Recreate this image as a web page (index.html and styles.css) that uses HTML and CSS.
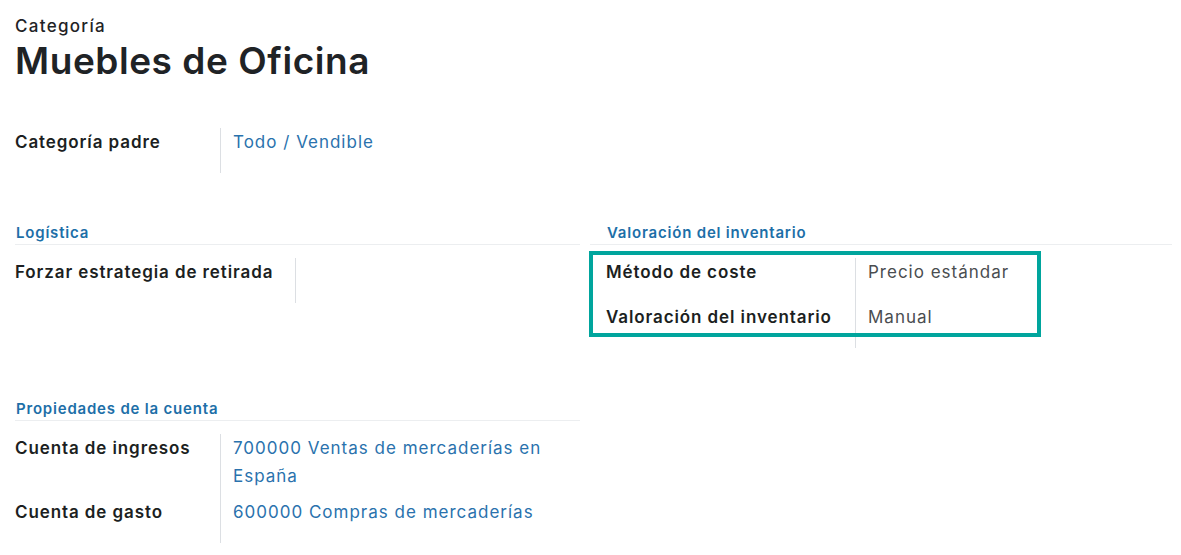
FILE: index.html
```html
<!DOCTYPE html>
<html lang="es">
<head>
<meta charset="utf-8">
<title>Categoría - Muebles de Oficina</title>
<link rel="stylesheet" href="styles.css">
</head>
<body>
<div class="sheet">
  <div class="title-block">
    <div class="cat-label">Categoría</div>
    <h1 class="title">Muebles de Oficina</h1>
  </div>

  <div class="main-group">
    <div class="field-table t-parent">
      <div class="lbl">Categoría padre</div>
      <div class="val link">Todo / Vendible</div>
    </div>
  </div>

  <div class="groups">
    <section class="group">
      <h2 class="sep">Logística</h2>
      <div class="field-table t-log">
        <div class="lbl">Forzar estrategia de retirada</div>
        <div class="val"></div>
      </div>
    </section>

    <section class="group g-right">
      <h2 class="sep">Valoración del inventario</h2>
      <div class="field-table t-val">
        <div class="lbl">Método de coste</div>
        <div class="val plain">Precio estándar</div>
        <div class="lbl">Valoración del inventario</div>
        <div class="val plain">Manual</div>
      </div>
      <div class="highlight"></div>
    </section>

    <section class="group">
      <h2 class="sep">Propiedades de la cuenta</h2>
      <div class="field-table t-acc">
        <div class="lbl">Cuenta de ingresos</div>
        <div class="val link">700000 Ventas de mercaderías en España</div>
        <div class="lbl">Cuenta de gasto</div>
        <div class="val link">600000 Compras de mercaderías</div>
      </div>
    </section>
  </div>
</div>
</body>
</html>
```

FILE: styles.css
```css
html, body {
  margin: 0;
  padding: 0;
  background: #ffffff;
}

body {
  font-family: "Inter", "Noto Sans", sans-serif;
  color: #1f2326;
}

.sheet {
  padding: 16px 9px 0 15px;
}

.cat-label {
  font-size: 17px;
  font-weight: 500;
  line-height: 20px;
  letter-spacing: 1.3px;
  margin-bottom: 3px;
}

.title {
  margin: 0;
  font-size: 37px;
  font-weight: 600;
  line-height: 44px;
  letter-spacing: 0.55px;
}

.main-group {
  margin-top: 45px;
  width: 565px;
}

.field-table {
  display: grid;
  font-size: 17px;
}

.t-parent,
.t-acc {
  grid-template-columns: 205px 1fr;
}

.t-log {
  grid-template-columns: 280px 1fr;
}

.t-val {
  grid-template-columns: 249px 1fr;
  margin-left: 16px;
}

.lbl {
  font-weight: 600;
  line-height: 28px;
  letter-spacing: 0.9px;
  color: #1c1f22;
}

.val {
  border-left: 1px solid #dcdfe3;
  padding: 0 12px 8px;
  line-height: 28px;
  letter-spacing: 1px;
  min-height: 45px;
  box-sizing: border-box;
}

.link {
  color: #2a72ad;
}

.plain {
  color: #4a4d50;
}

.groups {
  margin-top: 50px;
  display: grid;
  grid-template-columns: 565px 582px;
  column-gap: 10px;
  row-gap: 51px;
  align-items: start;
}

.group {
  position: relative;
}

.sep {
  margin: 0 0 13px;
  padding: 0 0 1px 1px;
  font-size: 15px;
  font-weight: 600;
  line-height: 20px;
  letter-spacing: 0.8px;
  color: #1d6fa8;
  border-bottom: 1px solid #eceef0;
}

.g-right .sep {
  padding-left: 17px;
}

.highlight {
  position: absolute;
  left: -1px;
  top: 28px;
  width: 452px;
  height: 86px;
  box-sizing: border-box;
  border: 4px solid #00a59d;
  pointer-events: none;
}
```
